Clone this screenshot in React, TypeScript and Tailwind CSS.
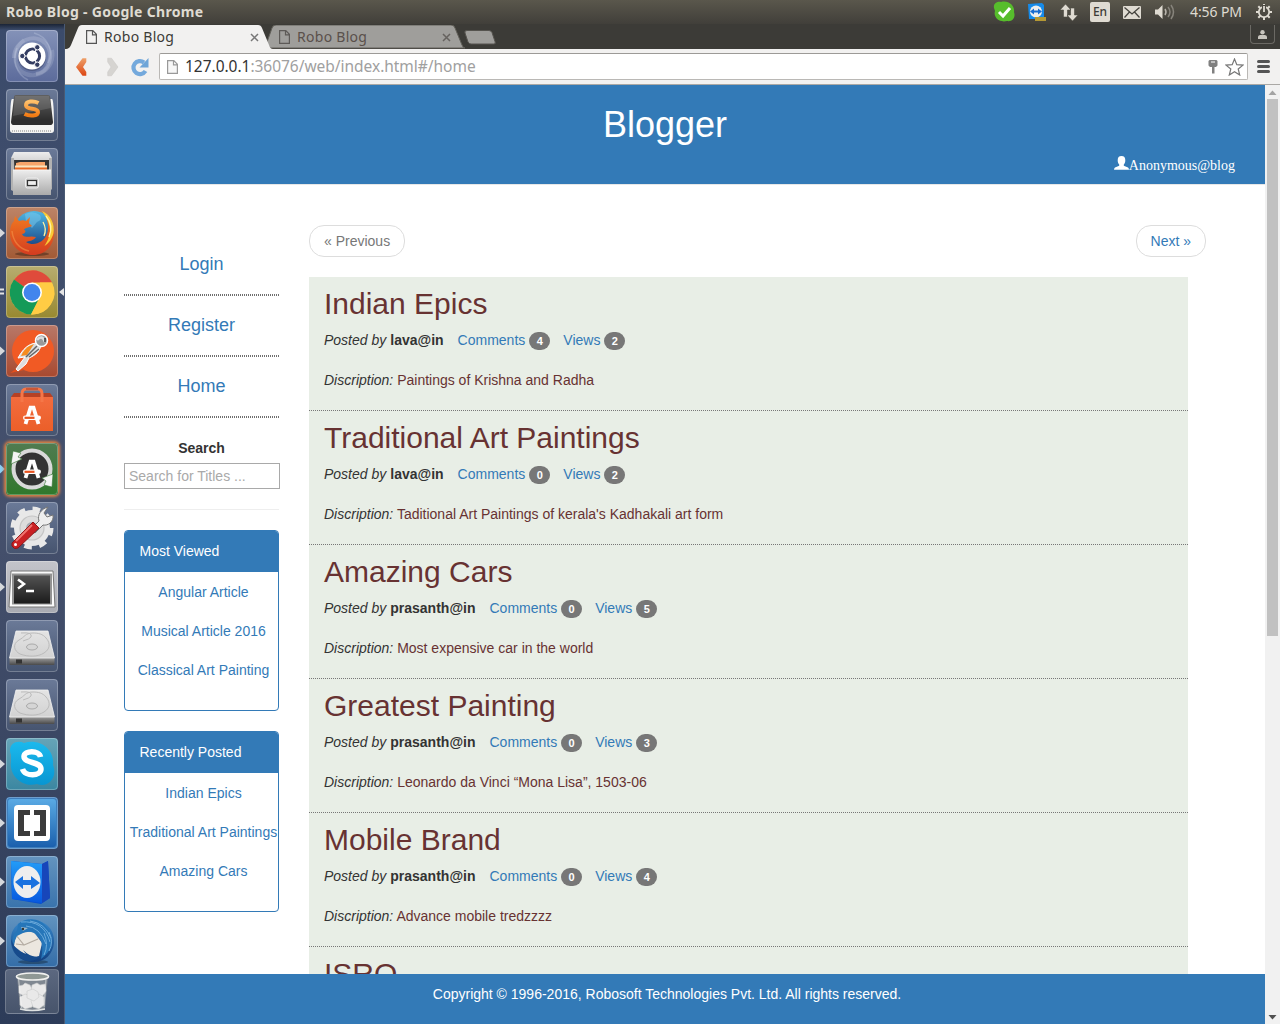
import React from 'react';

const ui = "font-['Noto_Sans',sans-serif]";

/* ---------- launcher icons, each drawn on a 52x52 tile ---------- */

const Dash = () => (
  <>
    <path d="M8 28C8 10 30 2 40 14c8 10 4 28-10 30" fill="none" stroke="#c3cbe0" strokeOpacity=".3" strokeWidth="4" />
    <path d="M46 20c4 18-16 32-30 22C6 34 8 18 18 10" fill="none" stroke="#c3cbe0" strokeOpacity=".22" strokeWidth="4" />
    <path d="M28 3c14 4 20 18 14 30M22 50C10 44 6 30 11 18" fill="none" stroke="#dde3f2" strokeOpacity=".25" strokeWidth="1.500" />
    <circle cx="26" cy="27" r="14" fill="#3d4669" opacity=".5" />
    <circle cx="26" cy="26" r="13.600" fill="#fff" />
    <circle cx="26.500" cy="26" r="7" fill="none" stroke="#343d62" strokeWidth="3.200" />
    <path d="M26.500 26H13M26.500 26L33 15M26.500 26L33 37" stroke="#fff" strokeWidth="1.200" />
    <circle cx="26.500" cy="26" r="5.400" fill="#fff" />
    <g fill="#343d62" stroke="#fff" strokeWidth="1"><circle cx="16.300" cy="26" r="2.700" /><circle cx="31.300" cy="17.300" r="2.700" /><circle cx="31.300" cy="34.700" r="2.700" /></g>
  </>
);

const Sublime = () => (
  <>
    <path d="M6 10Q4 10 4 41q0 3 3 3h38q3 0 3-3Q48 10 46 10z" fill="#f4f4f2" />
    <path d="M6 42h40" stroke="#aaa" strokeWidth="1.400" strokeDasharray="1 1" />
    <path d="M10 6h32q2 0 2.200 2L47 33q0 3-3 3H8q-3 0-3-3L8 8q0-2 2-2z" fill="url(#key)" />
    <path d="M6 31h40v3q0 2-2 2H8q-2 0-2-2z" fill="#2d2d2d" />
    <path d="M9 7h34l2 12L7 27z" fill="#fff" opacity=".12" />
    <path d="M32.500 14c-5-2.500-12.500-2-12.500 2.200 0 5 12 2.300 12 7 0 4-8.500 4.300-13.500 1.800" fill="none" stroke="url(#orange)" strokeWidth="4" />
  </>
);

const Files = () => (
  <>
    <path d="M8 4h35l3 6v18H5V10z" fill="url(#metal)" />
    <path d="M8 12h35v16H8z" fill="#333" />
    <path d="M10 15l4-1h25v14H10z" fill="#f7a56a" />
    <path d="M9 19h32v8H9z" fill="#e96a24" /><path d="M9 17.500h32v2H9z" fill="#f8e4bf" />
    <path d="M5 10h3l1 34-4-2zM43 10h3v31l-3 3z" fill="#b2b2b2" />
    <path d="M7 22h38v25H7z" fill="url(#metal)" />
    <path d="M7 22h38" stroke="#f5f5f5" />
    <rect x="19.500" y="30" width="13" height="10" rx="2" fill="#c9c9c9" stroke="#eee" />
    <rect x="21.500" y="32.500" width="9" height="5" fill="#eee" stroke="#333" strokeWidth="1.200" />
  </>
);

const Firefox = () => (
  <>
    <ellipse cx="26" cy="47" rx="17" ry="2" fill="#000" opacity=".3" />
    <circle cx="28" cy="24" r="20" fill="url(#globe)" />
    <path d="M19 7q8-4 15 1 3 5-3 7l-5 6-6-6z" fill="#7cc9ee" opacity=".5" />
    <path d="M4 27c0-6 1-10 4-13l1-5 4 5c3-1 5-1 7 0l4-4-1 6 3 3c-3 2-7 1-8 4 3 0 1 4-2 4 2 5 8 1 14 3-2 4-8 4-10 5 8 5 18 0 21-8 2-6 1-13-2-20 7 5 9 12 9 19 0 13-9 22-21 22S4 39 4 27z" fill="url(#fox)" />
    <path d="M36 4c9 4 13 13 11.500 22-1 5-5 11-9 13 5-8 7-15 4-23-1-4-4-8-6.500-12z" fill="#f9c936" />
    <path d="M40 9c5 6 6 14 3 21M37 15q4 7 1 14" fill="none" stroke="#fff3a2" strokeWidth="1.300" />
    <path d="M6 24c1 10 7 18 17 20" fill="none" stroke="#f49347" strokeWidth="1.500" opacity=".6" />
  </>
);

const Chrome = () => (
  <>
    <circle cx="26" cy="26.500" r="22" fill="#fc4" />
    <path d="M26 26.500L8 14A22 22 0 0 1 46 16.500H26z" fill="#df4b3b" />
    <path d="M8 13.500A22 22 0 0 0 25 48.500l8-16-7-6z" fill="#159a58" />
    <path d="M46 16.500A22 22 0 0 1 25 48.500L34 32V16.500z" fill="#fc4" />
    <circle cx="26" cy="26.500" r="10" fill="#fff" /><circle cx="26" cy="26.500" r="8.400" fill="#4285ed" />
  </>
);

const Postman = () => (
  <>
    <circle cx="27" cy="26" r="21" fill="#f15a24" />
    <path d="M4 48l9-6 5 3z" fill="#e84f1c" />
    <path d="M30 18c-8 1-13 6-18 15l7-1-9 12 2 2 8-7 3-6c7-3 11-7 12-13z" fill="#ddd" stroke="#fff" strokeWidth="1" />
    <path d="M28 19c-7 2-11 7-13 12l6-1z" fill="#f68b1f" />
    <path d="M31 21L20 32M33 24l-10 8" stroke="#666" strokeWidth="1.500" />
    <circle cx="35.500" cy="15.500" r="6" fill="#999" stroke="#fff" strokeWidth="1.500" />
    <path d="M31 15q5-6 8 2" fill="none" stroke="#ddd" strokeWidth="2.500" /><path d="M39 13v4" stroke="#333" strokeWidth="1.500" />
  </>
);

const LetterA = () => (
  <g>
    <path d="M19.500 40L24.500 23.700h3L32.500 40" fill="none" stroke="#fff" strokeWidth="3.800" />
    <rect x="17" y="31.500" width="18" height="4.600" rx="2.300" fill="#fff" /><path d="M18.500 33.800h10" stroke="#e95420" strokeWidth="2.200" />
  </g>
);

const Software = () => (
  <>
    <path d="M5 13h42v34H5z" fill="url(#bag)" />
    <path d="M5 13l3-4h36l3 4z" fill="#b64124" />
    <path d="M16 18V10q0-5 4-5h12q4 0 4 5v8" fill="none" stroke="#f57748" strokeWidth="3" />
    <path d="M20 5h12" stroke="#cb5735" strokeWidth="2" />
    <LetterA />
  </>
);

const Updater = () => (
  <>
    <circle cx="26" cy="26" r="17" fill="#333" />
    <circle cx="26" cy="26" r="18.500" fill="none" stroke="#d9d9d9" strokeWidth="4" />
    <path d="M7 8l-2 13 11-5-4-2 3-4zM46 44l1-13-11 4 4 3-2 4z" fill="#f4f4f4" stroke="#347330" strokeWidth=".6" />
    <g transform="translate(0 -5)"><LetterA /></g>
  </>
);

const Settings = () => (
  <>
    <circle cx="26" cy="26" r="18" fill="#e8e8e8" />
    <circle cx="26" cy="26" r="19" fill="none" stroke="#e8e8e8" strokeWidth="5" strokeDasharray="7.460 7.460" />
    <circle cx="26" cy="26" r="12" fill="#ddd" stroke="#c5c5c5" strokeWidth="1.200" /><circle cx="26" cy="26" r="6" fill="#a5a9b2" />
    <path d="M26 26l7-7c-2-6 2-12 9-14l-4 6 3 4 6-2c1 7-5 11-10 10l-8 8z" fill="#eee" stroke="#777" />
    <path d="M27 20l6 6-21 20q-4 2-6-2v-3z" fill="#c92124" stroke="#8d1518" />
    <path d="M26 23L10 39" stroke="#ef7370" strokeWidth="2" /><circle cx="9.500" cy="42.500" r="1.500" fill="#fff" />
  </>
);

const Terminal = () => (
  <>
    <path d="M5 10h42l2 36H3z" fill="#fafafa" stroke="#777" />
    <rect x="6" y="12.500" width="40" height="31" fill="#929292" />
    <rect x="8" y="14.500" width="36" height="28" fill="url(#screen)" />
    <path d="M12 18.500l6 4.500-6 4.500M20 30h8" fill="none" stroke="#fff" strokeWidth="2.500" />
  </>
);

const Disk = () => (
  <>
    <path d="M3.500 38h45v6q0 1-1 1h-43q-1 0-1-1z" fill="url(#edge)" />
    <path d="M10 11h32l6.500 27H3.500z" fill="url(#disk)" stroke="#f3f3f3" strokeWidth=".8" />
    <path d="M27 13c-8 0-8 4-14 7-7 4-5 11 1 14 8 3 18 3 24-1 8-5 5-12 2-15-3-4-8-5-13-5z" fill="none" stroke="#bbb" />
    <path d="M15 13q12-1 10 4-1 2-8 4" fill="none" stroke="#bbb" />
    <ellipse cx="26" cy="27" rx="5.500" ry="3" fill="#d5d5d5" stroke="#aaa" />
    <path d="M10 39.500h6v4h-6z" fill="#333" />
  </>
);

const Skype = () => (
  <>
    <path d="M5 17C1 7 10 1 18 5c15-5 31 6 29 22 5 13-5 23-16 19C16 50 3 37 5 24z" fill="url(#sky)" />
    <path d="M34.500 19c-1-7-16.500-7-16.500-.5 0 7.500 17 4.500 17 12.500 0 7.500-16 8-18.500 0" fill="none" stroke="#fff" strokeWidth="5.500" />
  </>
);

const Brackets = () => (
  <>
    <rect x="2" y="2" width="48" height="48" rx="3" fill="url(#brk)" />
    <rect x="8" y="8" width="36" height="36" rx="4" fill="#fff" />
    <path d="M24 13H12v26h12v-5h-6V18h6zM28 13h12v26H28v-5h6V18h-6z" fill="#3b3b3b" />
  </>
);

const TeamViewer = () => (
  <>
    <path d="M5 5l31 3 6-3 2 37-9 6L6 43z" fill="#0750d0" />
    <path d="M5 5l31 3v39L6 43z" fill="url(#tv)" /><path d="M36 8l6-3 2 37-8 5z" fill="#1746ba" />
    <ellipse cx="21" cy="26" rx="13.500" ry="16" fill="#eee" />
    <path d="M9 26l8-6v4h8v-4l9 7-9 6v-4h-8v4z" fill="#1a72e0" />
  </>
);

const Thunderbird = () => (
  <>
    <ellipse cx="27" cy="47" rx="15" ry="2" fill="#000" opacity=".3" />
    <path d="M5 26C4 12 16 3 28 5c12 1 21 10 20 23-1 11-9 19-20 19C14 47 5 38 5 26z" fill="url(#tb)" />
    <path d="M10 19l17-3 9 12-3 13q-9 4-25-10z" fill="#ece7df" />
    <path d="M10 20l8 10 14-6M18 30l-8-1" fill="none" stroke="#b4aca2" strokeWidth="1.200" />
    <path d="M12 9c7-6 22-8 30 5 7 11 4 22-7 30 2-8 2-16-2-22-4-5-9-6-14-5l-8 4-4 9c-1-8 0-11 4-14z" fill="#2676b9" />
    <path d="M15 7q23-2 29 20M20 11q14 1 20 18M38 18q5 12 0 22M43 17q5 10 0 19M24 6q15 2 21 17" fill="none" stroke="#6cabdc" strokeWidth="1" />
    <path d="M5 24q4 13 15 15l-3-4q9 9 18 6-8 7-17 4Q6 40 5 24z" fill="#174b8c" /><path d="M15 12l7 1-5 3z" fill="#9fb8c9" /><circle cx="17" cy="14" r="1.200" fill="#333" />
  </>
);

const Trash = () => (
  <>
    <path d="M11 6h31l-3 33q-13 3-25 0z" fill="#8d9499" opacity=".75" />
    <ellipse cx="26.500" cy="6.500" rx="16" ry="3.500" fill="#8f9895" stroke="#f1f1ef" strokeWidth="1.600" />
    <g fill="#e9e9e9" stroke="#c9cbcb" strokeWidth=".6">
      <path d="M13 16l4-1 2-2 5 2 2 4-2 5-6 2-5-3z" /><path d="M26 15l5-2 3 2 5-1 1 7-4 6-6-1-5-5z" />
      <path d="M14 27l5-3 6 2 3 5-2 6-7 2-5-4z" /><path d="M27 26l6-2 5 3v8l-5 4-6-2-2-6z" /><path d="M21 21l6-2 5 3 1 5-5 4-7-3z" />
    </g>
    <path d="M12.500 8l3 30M40 9l-2 28" stroke="#fff" strokeOpacity=".5" />
    <path d="M14 39q12 3 25 0" fill="none" stroke="#dfe2e2" strokeWidth="1.500" />
  </>
);

const Gradients = () => (
  <svg className="absolute h-0 w-0" aria-hidden="true">
    <defs>
      {[
        ['key', '#606060', '#242424'], ['orange', '#ffc06a', '#f27b13'], ['metal', '#ededed', '#aaa'],
        ['globe', '#4fb7e3', '#123779'], ['fox', '#f07b21', '#d43c20'], ['bag', '#f36c3e', '#eb5f29'],
        ['screen', '#535353', '#1b1b1b'], ['disk', '#e4e4e4', '#d2d2d2'], ['sky', '#1bb9ed', '#0896d2'],
        ['brk', '#5aaae4', '#1b60ad'], ['tv', '#239cf7', '#0758df'], ['tb', '#398bce', '#123f7f'],
        ['edge', '#9a9a9a', '#4a4a4a'], ['back', '#eea069', '#dc4613'],
      ].map(([id, a, b]) => (
        <linearGradient key={id} id={id} x1="0" y1="0" x2="0" y2="1"><stop stopColor={a} /><stop offset="1" stopColor={b} /></linearGradient>
      ))}
    </defs>
  </svg>
);

const plain = 'bg-gradient-to-b from-[#6b7a98] to-[#46546f]';
const launcher: { Icon: () => React.ReactElement; tile: string; mark?: boolean; mode?: string }[] = [
  { Icon: Dash, tile: 'bg-gradient-to-b from-[#8492b8] to-[#5c6b9b]' },
  { Icon: Sublime, tile: plain },
  { Icon: Files, tile: plain },
  { Icon: Firefox, tile: 'bg-gradient-to-b from-[#bd8467] to-[#a25a35]', mark: true },
  { Icon: Chrome, tile: 'bg-gradient-to-b from-[#b7ad6f] to-[#98892f]', mode: 'active' },
  { Icon: Postman, tile: 'bg-gradient-to-b from-[#b87868] to-[#a8492f]', mark: true },
  { Icon: Software, tile: plain },
  { Icon: Updater, tile: 'bg-gradient-to-b from-[#507b50] to-[#2f782b] shadow-[0_0_3px_2px_#d98144]', mark: true, mode: 'blue' },
  { Icon: Settings, tile: plain },
  { Icon: Terminal, tile: 'bg-gradient-to-b from-[#c3c4ca] to-[#a9abb2]', mark: true },
  { Icon: Disk, tile: plain },
  { Icon: Disk, tile: plain },
  { Icon: Skype, tile: 'bg-gradient-to-b from-[#66a4b7] to-[#3b87a1]', mark: true },
  { Icon: Brackets, tile: 'bg-[#3e7ebc]', mark: true },
  { Icon: TeamViewer, tile: 'bg-gradient-to-b from-[#6494bf] to-[#3973ac]', mark: true },
  { Icon: Thunderbird, tile: 'bg-gradient-to-b from-[#6294c0] to-[#346da7]', mark: true },
];

const Launcher = () => (
  <nav className="relative w-[65px] shrink-0 border-r border-[#4a5a74] bg-gradient-to-b from-[#3b4b6b] via-[#45506c] via-50% to-[#2d3c59] pt-[6px]">
    <div className="absolute inset-x-0 top-0 h-[6px] bg-gradient-to-b from-[#1b2436] to-transparent" />
    <div className="flex flex-col gap-[7px]">
      {launcher.map(({ Icon, tile, mark, mode }, i) => (
        <div key={i} className="flex h-[52px] items-center">
          <span className="flex w-[6px] shrink-0 items-center">
            {mark && <svg width="5" height="10" viewBox="0 0 5 10"><path d="M0 .5L5 5 0 9.500z" fill={mode === 'blue' ? '#8ad0f5' : '#d5d8dc'} /></svg>}
            {mode === 'active' && <svg width="5" height="8"><path d="M0 1.500h4M0 5.500h4" stroke="#e4e4e4" strokeWidth="2" /></svg>}
          </span>
          <span className={'relative h-[52px] w-[52px] shrink-0 rounded-[4px] ' + tile}>
            <svg width="52" height="52" viewBox="0 0 52 52"><Icon /></svg>
            <span className="absolute inset-0 rounded-[4px] border border-white/25" />
          </span>
          {mode === 'active' && <svg className="ml-[1px] shrink-0" width="5" height="8"><path d="M5 0L0 4l5 4z" fill="#e4e4e4" /></svg>}
        </div>
      ))}
    </div>
    <div className="ml-[5px] mt-[2px] h-[45px] w-[54px] rounded-[4px] border border-white/20 bg-gradient-to-b from-[#5c6880] to-[#47546b]">
      <svg width="52" height="43" viewBox="0 0 52 43"><Trash /></svg>
    </div>
  </nav>
);

const TopBar = () => (
  <header className={ui + ' flex h-6 items-center justify-between bg-gradient-to-b from-[#5a574c] to-[#413f3a] pl-[6px] pr-2 text-[#dfdbd2]'}>
    <span className="text-[14px] font-bold leading-6 tracking-[0.32px]">Robo Blog - Google Chrome</span>
    <div className="flex items-center">
      <svg width="22" height="22" viewBox="0 0 22 22"><path d="M1 7C0 2 5 0 8 1c8-2 14 4 13 10 2 6-2 10-7 9C6 22 0 16 2 10z" fill="#57bd2c" /><path d="M6 11l4 4 7-8" fill="none" stroke="#fff" strokeWidth="3" /></svg>
      <svg className="ml-[13px]" width="18" height="19" viewBox="0 0 18 19"><path d="M0 1l14-1 2 2v14H1z" fill="#168bea" /><circle cx="8" cy="8.500" r="6" fill="#eee" /><path d="M2 8.500l4-3v2h4v-2l4 3-4 3v-2H6v2z" fill="#176bd0" /><path d="M7 14h11v4H7z" fill="#b49834" /></svg>
      <svg className="ml-[14px]" width="18" height="17" viewBox="0 0 18 17"><path d="M5.500 0L0 6h3.500v7h4V6H11zM12.500 17L7 11h3.500V4h4v7H18z" fill="#dfdbd2" stroke="#4b4942" strokeWidth=".6" /></svg>
      <span className="ml-[12px] flex h-5 w-5 items-center justify-center rounded-[2px] bg-[#dfdbd2] text-[12px] font-medium leading-5 text-[#3c3b37]">En</span>
      <svg className="ml-[13px]" width="18" height="13" viewBox="0 0 18 13"><rect width="18" height="13" rx="1" fill="#dfdbd2" /><path d="M1.500 1.500L9 8l7.500-6.500M1.500 11.500L6.500 6M16.500 11.500L11.500 6" fill="none" stroke="#45433e" strokeWidth="1.300" /></svg>
      <svg className="ml-[14px]" width="20" height="16" viewBox="0 0 20 16"><path d="M0 5.500h3L7.500 1v14L3 10.500H0z" fill="#dfdbd2" /><path d="M10 5q2 3 0 6" fill="none" stroke="#b9b5ad" strokeWidth="1.500" /><path d="M13 3q4 5 0 10M16 1q5 7 0 14" fill="none" stroke="#87847c" strokeWidth="1.500" /></svg>
      <span className="ml-[15px] w-[54px] whitespace-nowrap text-[14px] leading-6 tracking-[-0.1px]">4:56 PM</span>
      <svg className="ml-[12px]" width="16" height="16" viewBox="0 0 16 16"><circle cx="8" cy="8" r="5.200" fill="none" stroke="#dfdbd2" strokeWidth="1.800" /><path d="M8 0v3M8 13v3M0 8h3M13 8h3M2.300 2.300l2 2M11.700 11.700l2 2M2.300 13.700l2-2M11.700 4.300l2-2" stroke="#dfdbd2" strokeWidth="2" /><path d="M8 1v7" stroke="#4b4942" strokeWidth="4" /><path d="M8 2v6" stroke="#dfdbd2" strokeWidth="1.800" /></svg>
    </div>
  </header>
);

const PageIcon = ({ color = '#5a5a5a', fill = 'none' }) => (
  <svg className="shrink-0" width="11" height="14" viewBox="0 0 11 14"><path d="M.6.6h6.200l3.600 3.700v9.100H.6zM6.500.8v4h3.700" fill={fill} stroke={color} strokeWidth="1.200" /></svg>
);

const Tab = ({ active = false }: { active?: boolean }) => (
  <div className={'relative h-6 shrink-0 ' + (active ? 'z-10 w-[208px]' : '-ml-[9px] w-[203px]')}>
    <svg className="absolute inset-0" width={active ? 208 : 203} height="24" viewBox={active ? '0 0 208 24' : '0 0 203 24'}>
      {active
        ? <path d="M0 24c4 0 5-2 6-4L13 3q1-3 4-3h176q3 0 4 3l7 17q1 4 4 4z" fill="#f2f1f0" />
        : <path d="M5 23q-2 0-3-3L8 3q1-3 4-3h175q3 0 4 3l7 17q1 3 3 3z" fill="#9f9e9b" stroke="#62605a" />}
    </svg>
    <div className={'relative flex h-6 items-center ' + (active ? 'pl-[21px] pr-[14px]' : 'pl-[15px] pr-[16px]')}>
      <PageIcon color={active ? '#555' : '#5d5a57'} />
      <span className={'ml-[7px] text-[14px] leading-6 tracking-[0.28px] ' + (active ? 'text-[#3c3b37]' : 'text-[#5a504b]')}>Robo Blog</span>
      <svg className="ml-auto" width="9" height="9" viewBox="0 0 9 9"><path d="M1 1l7 7M8 1L1 8" stroke={active ? '#777' : '#66625f'} strokeWidth="1.500" /></svg>
    </div>
  </div>
);

const Browser = () => (
  <div className={ui}>
    <div className="flex h-[25px] items-start bg-[#3c3b37] pt-[1px]">
      <Tab active />
      <Tab />
      <svg className="ml-[-3px] mt-[5px]" width="32" height="15" viewBox="0 0 32 15"><path d="M3 .5h22q2 0 3 2l3 9q1 2.500-1 2.500H7q-2 0-3-2L1 3Q0 .5 3 .5z" fill="#9f9e9b" stroke="#55534e" /></svg>
      <div className="ml-auto mr-[5px] flex h-[19px] w-[25px] items-center justify-center rounded-b-[4px] border border-t-0 border-[#6b6964]">
        <svg width="9" height="9" viewBox="0 0 9 9"><circle cx="4.500" cy="2.300" r="2.200" fill="#c8c5be" /><path d="M0 9V7q0-1.500 2-2h5q2 .5 2 2v2z" fill="#c8c5be" /></svg>
      </div>
    </div>
    <div className="flex h-9 items-center border-b border-[#aaa8a5] bg-[#f2f1f0] pl-[10px] pr-[10px]">
      <svg width="13" height="20" viewBox="0 0 13 20"><path d="M1 10L7.500 1.200h3.800V5L8 10l3.300 5v3.800H7.500z" fill="url(#back)" /></svg>
      <svg className="ml-[18px]" width="13" height="20" viewBox="0 0 13 20"><path d="M12 10L5.500 1.200H1.700V5L5 10l-3.300 5v3.800h3.800z" fill="#d6d4d1" stroke="#c9c7c4" strokeWidth=".5" /></svg>
      <svg className="ml-[11px]" width="20" height="20" viewBox="0 0 20 20"><path d="M15.500 14A6.500 6.500 0 1 1 14 5.500" fill="none" stroke="#74a9dc" strokeWidth="4.200" /><path d="M18.500 1v9.500H9.500z" fill="#6ea5d8" /></svg>
      <div className="ml-[9px] flex h-[27px] flex-1 items-center rounded-[2px] border border-[#bab8b5] border-t-[#9c9a97] bg-white pl-[7px] pr-[3px]">
        <PageIcon color="#999" fill="#f7f7f7" />
        <span className="ml-[7px] text-[15.500px] leading-[25px] tracking-[-0.03px] text-[#a0a0a0]"><span className="text-[#333]">127.0.0.1</span>:36076/web/index.html#/home</span>
        <svg className="ml-auto" width="10" height="14" viewBox="0 0 10 14"><path d="M1.500 0h7L9.500 1v4.500L8 7H6.500v6.500H4V7H2L.5 5.500V1z" fill="#808080" /><path d="M3 2h4" stroke="#fff" /></svg>
        <svg className="ml-[7px]" width="19" height="18" viewBox="0 0 19 18"><path d="M9.500 1l2.300 5.700 6.200.4-4.800 3.900 1.500 6-5.200-3.300L4.300 17l1.500-6L1 7.100l6.200-.4z" fill="#fff" stroke="#777" strokeWidth="1.200" /></svg>
      </div>
      <svg className="ml-[9px]" width="13" height="13" viewBox="0 0 13 13"><path d="M1.500 1.500h10M1.500 6.500h10M1.500 11.500h10" stroke="#555" strokeWidth="3" strokeLinecap="round" /></svg>
    </div>
  </div>
);

/* ---------- blog page ---------- */

const posts = [
  ['Indian Epics', 'lava@in', '4', '2', 'Paintings of Krishna and Radha'],
  ['Traditional Art Paintings', 'lava@in', '0', '2', "Taditional Art Paintings of kerala's Kadhakali art form"],
  ['Amazing Cars', 'prasanth@in', '0', '5', 'Most expensive car in the world'],
  ['Greatest Painting', 'prasanth@in', '0', '3', 'Leonardo da Vinci “Mona Lisa”, 1503-06'],
  ['Mobile Brand', 'prasanth@in', '0', '4', 'Advance mobile tredzzzz'],
];

const Badge = ({ children }: { children: React.ReactNode }) => (
  <span className="ml-1 mt-[2px] flex h-[18px] w-[21px] items-center justify-center rounded-[10px] bg-[#777] text-[11px] font-bold leading-none text-white">{children}</span>
);

const Title = ({ children }: { children: React.ReactNode }) => (
  <h2 className="text-[30px] leading-[33px] text-[#673232]">{children}</h2>
);

const Panel = ({ title, items }: { title: string; items: string[] }) => (
  <section className="mt-5 h-[181px] overflow-hidden rounded-[4px] border border-[#337ab7]">
    <h3 className="h-[41px] bg-[#337ab7] pl-[14.5px] leading-[40px] text-white">{title}</h3>
    <ul className="flex flex-col gap-[19px] whitespace-nowrap pl-[4px] pt-[10px] text-center leading-5 text-[#337ab7]">
      {items.map((item) => <li key={item}>{item}</li>)}
    </ul>
  </section>
);

const Blog = () => (
  <div className="flex min-h-0 flex-1 flex-col bg-white font-['Liberation_Sans',Arial,sans-serif] text-[14px] text-[#333]">
    <header className="flex h-[100px] shrink-0 flex-col border-b border-[#e7e7e7] bg-[#337ab7] text-white">
      <h1 className="mt-[20px] text-center text-[36px] leading-10">Blogger</h1>
      <div className="mr-[30px] mt-[11px] flex justify-end font-['Liberation_Serif',serif] leading-5">
        <svg width="15" height="14" viewBox="0 0 15 14"><path d="M7.500 0C10.200 0 11.300 1.500 11.300 4.200c0 2-.6 3.500-1.500 4.400v1.200L14 11.600q.8.600 1 2.200H0q.2-1.600 1-2.200l4.200-1.800V8.600C4.300 7.700 3.700 6.200 3.700 4.200 3.700 1.500 4.800 0 7.500 0z" fill="#fff" /></svg>
        <span>Anonymous@blog</span>
      </div>
    </header>
    <div className="flex min-h-0 flex-1 overflow-hidden">
      <aside className="ml-[59px] w-[155px] shrink-0 pt-[50px]">
        <nav className="text-center text-[18px] text-[#337ab7]">
          {['Login', 'Register', 'Home'].map((item) => (
            <a key={item} className="block h-[61px] pt-[17px] leading-[25px]">
              {item}
              <svg className="mt-[17px] block" width="155" height="2"><path d="M0 1h155" stroke="#6f6f6f" strokeWidth="2" strokeDasharray="1 1" /></svg>
            </a>
          ))}
        </nav>
        <label className="mt-[20px] block pb-[5px] text-center font-bold leading-5">Search</label>
        <input className="block h-[26px] w-[156px] border border-[#a9a9a9] px-[4px] text-[14px] outline-none placeholder:text-[#a9a9a9]" placeholder="Search for Titles ..." />
        <hr className="mt-5 border-[#eee]" />
        <Panel title="Most Viewed" items={['Angular Article', 'Musical Article 2016', 'Classical Art Painting']} />
        <Panel title="Recently Posted" items={['Indian Epics', 'Traditional Art Paintings', 'Amazing Cars']} />
      </aside>
      <main className="ml-[30px] w-[897px] shrink-0 pt-[40px]">
        <div className="flex justify-between">
          <span className="h-8 rounded-[15px] border border-[#ddd] px-[14px] leading-[30px] text-[#777]">« Previous</span>
          <span className="h-8 rounded-[15px] border border-[#ddd] px-[14px] leading-[30px] text-[#337ab7]">Next »</span>
        </div>
        <div className="mt-5 w-[879px] bg-[#e8eee6]">
          {posts.map(([title, author, comments, views, text]) => (
            <article key={title} className="h-[134px] border-b border-dotted border-[#777] px-[15px] pt-[10px]">
              <Title>{title}</Title>
              <div className="mt-[10px] flex h-5 leading-5">
                <i>Posted by</i><b className="ml-1">{author}</b>
                <span className="ml-[14px] flex text-[#337ab7]">Comments <Badge>{comments}</Badge></span>
                <span className="ml-[13px] flex text-[#337ab7]">Views <Badge>{views}</Badge></span>
              </div>
              <p className="mt-5 leading-5 text-[#673232]"><i className="text-[#333]">Discription:</i> {text}</p>
            </article>
          ))}
          <article className="px-[15px] pt-[10px]"><Title>ISRO</Title></article>
        </div>
      </main>
    </div>
    <footer className="h-[50px] shrink-0 bg-[#337ab7] pl-[4px] text-center leading-[40px] text-white">Copyright © 1996-2016, Robosoft Technologies Pvt. Ltd. All rights reserved.</footer>
  </div>
);

const Scrollbar = () => (
  <div className="flex w-[15px] shrink-0 flex-col items-center bg-[#f1f1f1]">
    <svg width="15" height="14"><path d="M3.500 10L7.500 5.500l4 4.500z" fill="#a3a3a3" /></svg>
    <div className="h-[537px] w-[11px] bg-[#c1c1c1]" />
    <svg className="mt-auto" width="15" height="14"><path d="M3.500 5l4 4.500 4-4.500z" fill="#505050" /></svg>
  </div>
);

export default function App() {
  return (
    <div className="flex h-[1024px] w-[1280px] flex-col overflow-hidden">
      <Gradients />
      <TopBar />
      <div className="flex min-h-0 flex-1">
        <Launcher />
        <div className="flex min-w-0 flex-1 flex-col">
          <Browser />
          <div className="flex min-h-0 flex-1"><Blog /><Scrollbar /></div>
        </div>
      </div>
    </div>
  );
}
